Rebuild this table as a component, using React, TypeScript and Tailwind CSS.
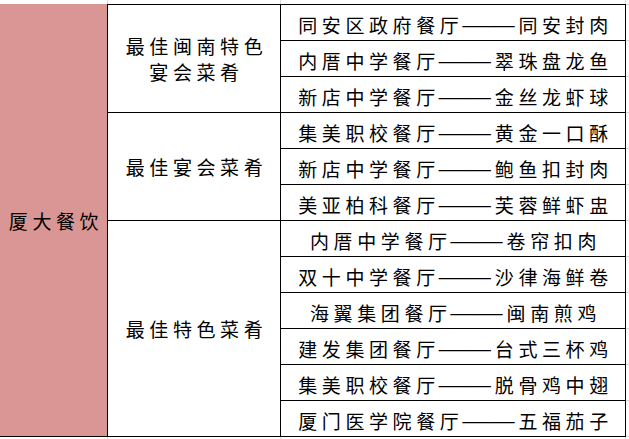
import React from "react";

const groups: { title: string[]; items: string[] }[] = [
  {
    title: ["最佳闽南特色", "宴会菜肴"],
    items: ["同安区政府餐厅——同安封肉", "内厝中学餐厅——翠珠盘龙鱼", "新店中学餐厅——金丝龙虾球"],
  },
  {
    title: ["最佳宴会菜肴"],
    items: ["集美职校餐厅——黄金一口酥", "新店中学餐厅——鲍鱼扣封肉", "美亚柏科餐厅——芙蓉鲜虾盅"],
  },
  {
    title: ["最佳特色菜肴"],
    items: [
      "内厝中学餐厅——卷帘扣肉",
      "双十中学餐厅——沙律海鲜卷",
      "海翼集团餐厅——闽南煎鸡",
      "建发集团餐厅——台式三杯鸡",
      "集美职校餐厅——脱骨鸡中翅",
      "厦门医学院餐厅——五福茄子",
    ],
  },
];

const rowCount = groups.reduce((n, g) => n + g.items.length, 0);

function Item({ text }: { text: string }) {
  const [a, b] = text.split("——");
  return (
    <span className="inline-flex items-center">
      <span>{a}</span>
      <span
        className="text-[26px] tracking-[0px] leading-none mr-[4px] -ml-[1px] relative top-[-1px]"
        style={{ fontFamily: '"Liberation Serif", serif' }}
      >
        ——
      </span>
      <span>{b}</span>
    </span>
  );
}

export default function App() {
  return (
    <div
      className="w-[629px] h-[439px] bg-white overflow-hidden flex flex-col text-black text-[19px] tracking-[4.6px]"
      style={{ fontFamily: '"Noto Sans CJK SC", "Noto Sans", sans-serif' }}
    >
      {/* top gridline stubs */}
      <div className="h-[4px] flex shrink-0">
        <div className="w-[108px] border-r border-[#d9d9d9]" />
        <div className="w-[173px] border-r border-[#d9d9d9]" />
        <div className="w-[345px] border-r border-[#d9d9d9]" />
      </div>

      <div className="flex shrink-0">
        {/* pink column */}
        <div className="w-[107px] h-[433px] bg-[#da9694] border-b border-black flex items-center justify-center pt-[3px] pl-[5px]">
          厦大餐饮
        </div>

        {/* table body */}
        <div className="w-[519px] flex flex-col border-l border-t border-r border-black">
          {groups.map((g, gi) => (
            <div key={gi} className="flex">
              <div className="w-[173px] border-r border-b border-black flex flex-col items-center justify-center leading-[26px] pt-[0px] pl-[5px]">
                {g.title.map((t, i) => (
                  <div key={i}>{t}</div>
                ))}
              </div>
              <div className="flex-1 flex flex-col">
                {g.items.map((it, i) => (
                  <div
                    key={i}
                    className="h-[36px] border-b border-black flex items-center justify-center pt-[6px] pl-[5px] whitespace-nowrap"
                  >
                    <Item text={it} />
                  </div>
                ))}
              </div>
            </div>
          ))}
        </div>

        {/* right gridline stubs */}
        <div className="flex-1 flex flex-col">
          {Array.from({ length: rowCount + 1 }).map((_, i) => (
            <div key={i} className={i === 0 ? "h-px bg-[#d9d9d9]" : "h-[36px] border-b border-[#d9d9d9]"} />
          ))}
        </div>
      </div>

      {/* bottom gridline stubs */}
      <div className="flex-1 flex">
        <div className="w-[108px] border-r border-[#d9d9d9]" />
        <div className="w-[173px] border-r border-[#d9d9d9]" />
        <div className="w-[345px] border-r border-[#d9d9d9]" />
      </div>
    </div>
  );
}
